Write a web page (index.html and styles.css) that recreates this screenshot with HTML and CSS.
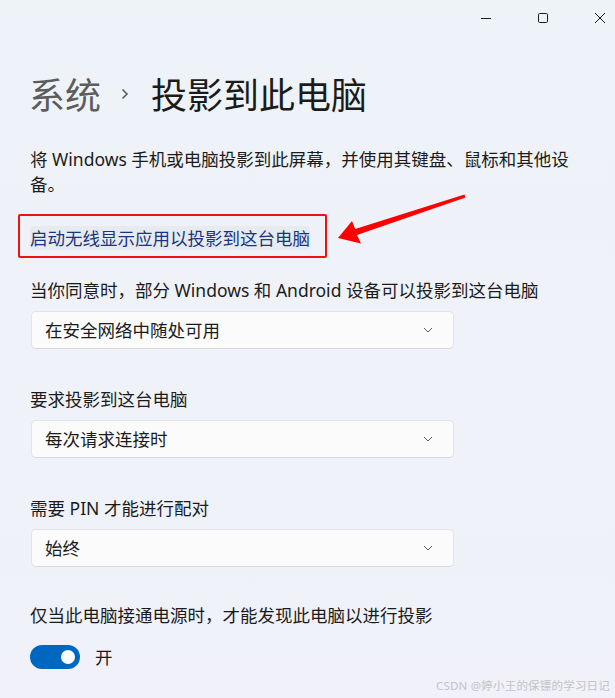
FILE: index.html
```html
<!DOCTYPE html>
<html lang="zh-CN">
<head>
<meta charset="utf-8">
<title>投影到此电脑</title>
<link rel="stylesheet" href="styles.css">
</head>
<body>
<div class="window">
  <div class="titlebar">
    <svg class="ctl" width="10" height="10" viewBox="0 0 10 10"><path d="M0 5.5H10" stroke="#1b1b1b" stroke-width="1"/></svg>
    <svg class="ctl" width="10" height="10" viewBox="0 0 10 10"><rect x="0.5" y="0.5" width="9" height="9" rx="1.2" fill="none" stroke="#1b1b1b" stroke-width="1"/></svg>
    <svg class="ctl" width="10" height="10" viewBox="0 0 10 10"><path d="M0 0L10 10M10 0L0 10" stroke="#1b1b1b" stroke-width="1"/></svg>
  </div>

  <div class="content">
    <h1 class="crumb">
      <span class="crumb-parent">系统</span>
      <svg class="crumb-sep" width="8" height="12" viewBox="0 0 8 12"><path d="M1.5 1.5L6 6L1.5 10.5" fill="none" stroke="#5c5c5c" stroke-width="1.6"/></svg>
      <span class="crumb-current">投影到此电脑</span>
    </h1>

    <p class="desc">将 Windows 手机或电脑投影到此屏幕，并使用其键盘、鼠标和其他设备。</p>

    <div class="link-wrap">
      <a class="link">启动无线显示应用以投影到这台电脑</a>
      <span class="annot-box"></span>
    </div>

    <div class="setting">
      <div class="label">当你同意时，部分 Windows 和 Android 设备可以投影到这台电脑</div>
      <div class="select"><span>在安全网络中随处可用</span><svg width="10" height="6" viewBox="0 0 10 6"><path d="M1 1L5 5L9 1" fill="none" stroke="#5a5a5a" stroke-width="1"/></svg></div>
    </div>

    <div class="setting">
      <div class="label">要求投影到这台电脑</div>
      <div class="select"><span>每次请求连接时</span><svg width="10" height="6" viewBox="0 0 10 6"><path d="M1 1L5 5L9 1" fill="none" stroke="#5a5a5a" stroke-width="1"/></svg></div>
    </div>

    <div class="setting">
      <div class="label">需要 PIN 才能进行配对</div>
      <div class="select"><span>始终</span><svg width="10" height="6" viewBox="0 0 10 6"><path d="M1 1L5 5L9 1" fill="none" stroke="#5a5a5a" stroke-width="1"/></svg></div>
    </div>

    <div class="setting last">
      <div class="label">仅当此电脑接通电源时，才能发现此电脑以进行投影</div>
      <div class="toggle-row">
        <span class="toggle"><span class="knob"></span></span>
        <span class="toggle-text">开</span>
      </div>
    </div>
  </div>

  <svg class="annot-arrow" width="615" height="698" viewBox="0 0 615 698">
    <polygon points="464.5,194.6 355.2,229 352,221 338,238 361,243.5 357,235 465.5,197.4" fill="#ff0000"/>
  </svg>

  <div class="watermark">CSDN @婷小王的保镖的学习日记</div>
</div>
</body>
</html>
```

FILE: styles.css
```css
html, body {
  margin: 0;
  padding: 0;
}

body {
  width: 615px;
  height: 698px;
  overflow: hidden;
  font-family: "Noto Sans", "Noto Sans CJK SC", sans-serif;
  color: #1b1b1b;
  background: linear-gradient(to bottom, #eef3f8 0%, #eff2f8 60%, #f0f1f9 100%);
}

.window {
  position: relative;
  width: 615px;
  height: 698px;
}

.titlebar {
  height: 36px;
  display: flex;
  justify-content: flex-end;
  align-items: center;
  gap: 47px;
  padding-right: 10px;
  box-sizing: border-box;
}

.ctl {
  display: block;
}

.content {
  padding: 0 20px 0 29px;
}

.crumb {
  margin: 34px 0 0 0;
  height: 46px;
  display: flex;
  align-items: center;
  font-weight: normal;
  font-size: 36px;
  line-height: 46px;
  font-family: "Noto Sans CJK SC", sans-serif;
}

.crumb-parent {
  color: #5c5c5c;
}

.crumb-sep {
  margin: 2px 22px 0 20px;
}

.crumb-current {
  color: #1b1b1b;
}

.desc {
  margin: 31px 0 0 1px;
  font-size: 17.5px;
  line-height: 25px;
}

.link-wrap {
  position: relative;
  margin-top: 28.5px;
  margin-left: 1px;
  display: inline-block;
  vertical-align: top;
}

.link {
  display: block;
  height: 24px;
  line-height: 24px;
  font-size: 17.5px;
  color: #17367f;
  background: #e7eaef;
  border-radius: 4px;
}

.annot-box {
  position: absolute;
  left: -12px;
  top: -12px;
  right: -17px;
  bottom: -8px;
  border: 2px solid #f01010;
  border-radius: 2px;
}

.setting {
  margin-top: 28px;
  margin-left: 1px;
}

.setting + .setting {
  margin-top: 38px;
}

.setting.last {
  margin-top: 36px;
}

.label {
  font-size: 17.5px;
  line-height: 24px;
}

.select {
  margin-top: 9px;
  margin-left: 1px;
  width: 423px;
  height: 38px;
  box-sizing: border-box;
  background: #fbfbfc;
  border: 1px solid #e3e4e7;
  border-bottom-color: #d6d7da;
  border-radius: 5px;
  display: flex;
  align-items: center;
  justify-content: space-between;
  padding: 0 20px 0 13px;
  font-size: 17.5px;
}

.toggle-row {
  margin-top: 18px;
  display: flex;
  align-items: center;
  gap: 15px;
  height: 24px;
}

.toggle {
  width: 50px;
  height: 24px;
  border-radius: 12px;
  background: #0067c0;
  display: flex;
  align-items: center;
  justify-content: flex-end;
  padding-right: 5px;
  box-sizing: border-box;
}

.knob {
  width: 14px;
  height: 14px;
  border-radius: 50%;
  background: #ffffff;
}

.toggle-text {
  font-size: 17.5px;
  line-height: 24px;
}

.annot-arrow {
  position: absolute;
  left: 0;
  top: 0;
  pointer-events: none;
}

.watermark {
  position: absolute;
  right: 5px;
  bottom: 4px;
  font-size: 11.5px;
  line-height: 16px;
  color: #c2c4c8;
  letter-spacing: 0.2px;
}
```
